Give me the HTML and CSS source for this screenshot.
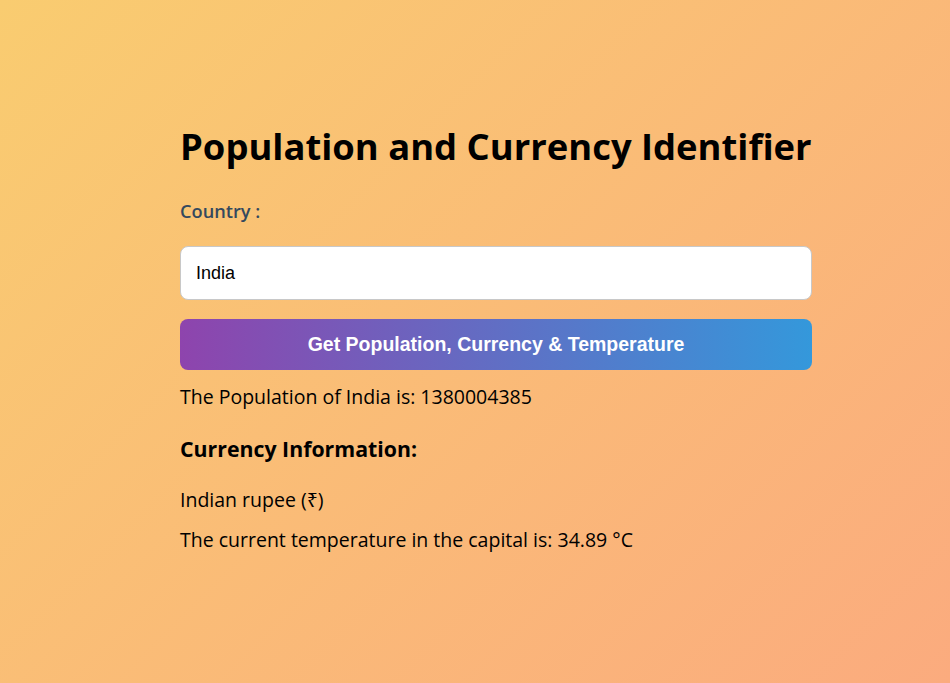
FILE: index.html
```html
<!DOCTYPE html>
<html lang="en">
<head>
<meta charset="utf-8">
<title>Population and Currency Identifier</title>
<link rel="stylesheet" href="styles.css">
</head>
<body>
<main class="container">
  <h1 class="title">Population and Currency Identifier</h1>
  <label class="label" for="country">Country :</label>
  <input class="input" id="country" type="text" value="India">
  <button class="button" type="button">Get Population, Currency &amp; Temperature</button>
  <p class="result">The Population of India is: 1380004385</p>
  <h3 class="subtitle">Currency Information:</h3>
  <p class="result">Indian rupee (₹)</p>
  <p class="result">The current temperature in the capital is: 34.89 °C</p>
</main>
</body>
</html>
```
FILE: styles.css
```css
html, body {
  margin: 0;
  padding: 0;
  height: 100%;
}
body {
  background: linear-gradient(135deg, #f9cc70 0%, #fbab7e 100%);
  font-family: "Open Sans", "Noto Sans", sans-serif;
  color: #000;
}
.container {
  width: 632px;
  margin-left: 180px;
  padding-top: 120px;
  display: flex;
  flex-direction: column;
}
.title {
  margin: 0;
  font-size: 36.4px;
  font-weight: 700;
  line-height: 52px;
  white-space: nowrap;
}
.label {
  margin-top: 26px;
  font-size: 18.2px;
  font-weight: 600;
  color: #34495e;
  line-height: 26px;
}
.input {
  margin-top: 22px;
  height: 54px;
  box-sizing: border-box;
  border: 1px solid #c8c8c8;
  border-radius: 8px;
  padding: 0 15px;
  font-family: "Liberation Sans", Arial, sans-serif;
  font-size: 18px;
  color: #000;
  background: #fff;
  outline: none;
}
.button {
  margin-top: 19px;
  height: 51px;
  border: none;
  border-radius: 8px;
  background: linear-gradient(90deg, #8e44ad 0%, #3498db 100%);
  color: #fff;
  font-family: "Liberation Sans", Arial, sans-serif;
  font-size: 19.5px;
  font-weight: 700;
}
.result {
  margin: 14px 0 0;
  font-size: 19.5px;
  line-height: 26px;
}
.subtitle {
  margin: 25px 0 12px;
  font-size: 21.3px;
  font-weight: 700;
  line-height: 28px;
}
.subtitle + .result {
  margin-top: 12px;
}
```
